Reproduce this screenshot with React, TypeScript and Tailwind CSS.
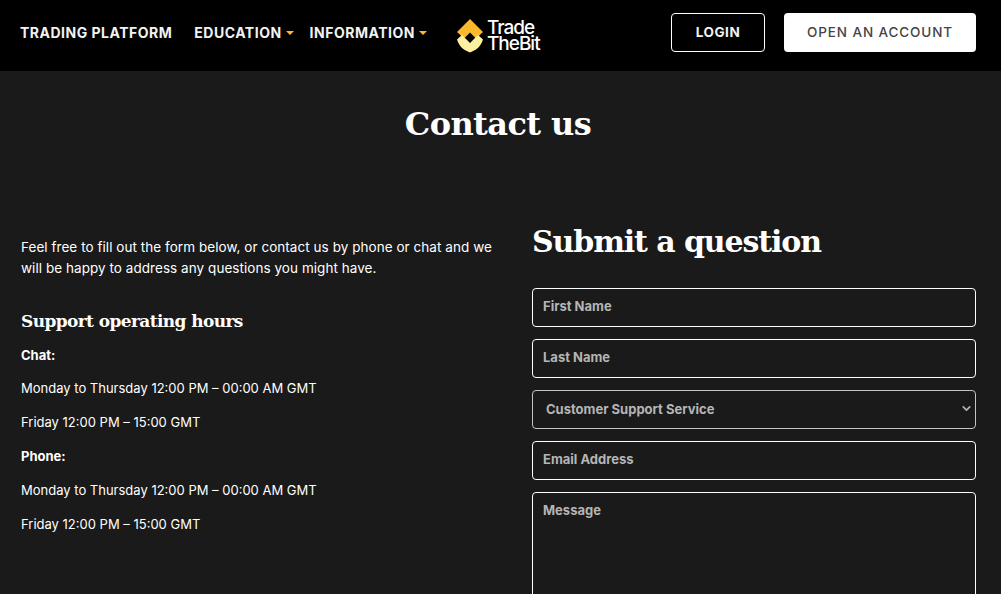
import { ChevronDown } from 'lucide-react'

const sans = "font-['Inter','Open_Sans',sans-serif]"
const serif = "font-['DejaVu_Serif','Liberation_Serif',serif]"

function Logo() {
  return (
    <div className="flex items-center gap-[3px] mt-[6px]">
      <svg width="28" height="34" viewBox="0 0 28 34">
        <path d="M14 0L27 13L20 19.5L14 13.5L8 19.5L1 13Z" fill="#fdb92e" />
        <path d="M1 20.5L6 16L14 24L22 16L27 20.5C24 29 20 31 14 33.5C8 31 4 29 1 20.5Z" fill="#fdf0a0" />
      </svg>
      <div className="flex flex-col text-white text-[19px] font-medium leading-[16px] tracking-[-1px] font-['Inter',sans-serif]">
        <span>Trade</span>
        <span>TheBit</span>
      </div>
    </div>
  )
}

function NavLink({ label, caret }: { label: string; caret?: boolean }) {
  return (
    <a className="flex items-center gap-[4px] text-[14px] font-bold tracking-[0.5px] text-[#f2f2f2]">
      {label}
      {caret && <span className="mt-[1px] w-0 h-0 border-x-[4px] border-x-transparent border-t-[4px] border-t-[#fdb92e]" />}
    </a>
  )
}

function Field({ placeholder }: { placeholder: string }) {
  return (
    <input
      placeholder={placeholder}
      className="w-full h-[39px] bg-transparent border border-white rounded-[4px] px-[10px] pb-[3px] text-[13px] font-bold placeholder:text-[#b5b5b5] outline-none"
    />
  )
}

function Hours() {
  return (
    <>
      <p>Monday to Thursday 12:00 PM – 00:00 AM GMT</p>
      <p>Friday 12:00 PM – 15:00 GMT</p>
    </>
  )
}

export default function App() {
  return (
    <div className={`h-[594px] overflow-hidden bg-[#1a1a1a] text-white ${sans}`}>
      <header className="h-[71px] bg-black flex items-center justify-between pl-[20px] pr-[25px] pb-[6px]">
        <div className="flex items-center">
          <nav className="flex items-center gap-[22px]">
            <NavLink label="TRADING PLATFORM" />
            <NavLink label="EDUCATION" caret />
          </nav>
          <div className="ml-[16px]"><NavLink label="INFORMATION" caret /></div>
          <div className="ml-[29px]"><Logo /></div>
        </div>
        <div className="flex items-center gap-[19px]">
          <button className="w-[94px] h-[39px] border border-white rounded-[4px] text-[13.5px] font-bold tracking-[0.5px] text-[#f2f2f2]">LOGIN</button>
          <button className="w-[192px] h-[39px] bg-white rounded-[4px] text-[13.5px] font-medium tracking-[0.9px] text-[#444]">OPEN AN ACCOUNT</button>
        </div>
      </header>

      <h1 className={`${serif} text-center text-[32px] tracking-[-0.6px] font-bold leading-[44px] mt-[31px] pr-[5px]`}>Contact us</h1>

      <main className="flex pl-[21px] pr-[25px] mt-[73px]">
        <div className="w-[511px] pr-[38px] pt-[18px] text-[13px] leading-[22px]">
          <p className="text-[13.5px] leading-[21px] tracking-[0.05px]">Feel free to fill out the form below, or contact us by phone or chat and we will be happy to address any questions you might have.</p>
          <h3 className={`${serif} text-[17px] tracking-[-0.6px] font-bold leading-[24px] mt-[30px]`}>Support operating hours</h3>
          <div className="flex flex-col gap-[11.9px] mt-[10.5px]">
            <p className="font-bold">Chat:</p>
            <Hours />
            <p className="font-bold">Phone:</p>
            <Hours />
          </div>
        </div>

        <form className="w-[444px]">
          <h2 className={`${serif} text-[30px] tracking-[-1.1px] font-bold leading-[44px] pt-[1px] box-content`}>Submit a question</h2>
          <div className="flex flex-col gap-[12px] mt-[24px]">
            <Field placeholder="First Name" />
            <Field placeholder="Last Name" />
            <div className="relative">
              <select className="w-full h-[39px] appearance-none bg-transparent border border-[#c4c4c4] rounded-[4px] px-[13px] text-[13px] font-bold text-[#b5b5b5] outline-none">
                <option>Customer Support Service</option>
              </select>
              <ChevronDown size={13} strokeWidth={3} className="absolute right-[3px] top-[12px] text-[#b5b5b5] pointer-events-none" />
            </div>
            <Field placeholder="Email Address" />
            <textarea
              placeholder="Message"
              className="w-full h-[180px] bg-transparent border border-white rounded-[4px] px-[10px] py-[8px] text-[13px] font-bold placeholder:text-[#b5b5b5] outline-none resize-none"
            />
          </div>
        </form>
      </main>
    </div>
  )
}
